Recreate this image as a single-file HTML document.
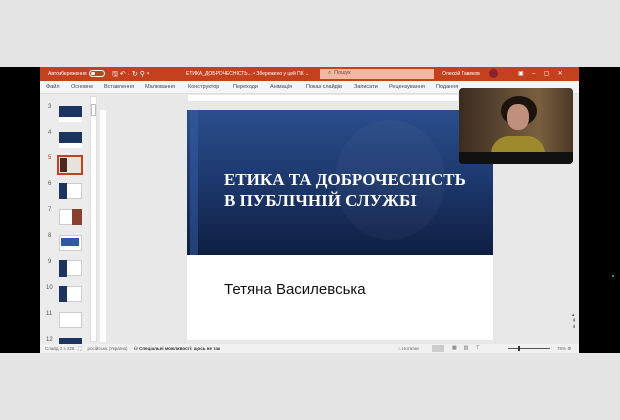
<!DOCTYPE html>
<html><head><meta charset="utf-8"><style>
*{margin:0;padding:0;box-sizing:border-box}
body{width:620px;height:420px;background:#e4e4e4;position:relative;overflow:hidden;font-family:"Liberation Sans",sans-serif}
.a{position:absolute}
.t{font-size:5px;color:#fff;white-space:nowrap}
.tab{font-size:5.5px;color:#444;white-space:nowrap;top:84px}
.th{position:absolute;left:59px;width:23px;height:16px;background:#fff;border:1px solid #ccc}
.n{position:absolute;left:48px;font-size:6px;color:#555}
.db{background:#1d3461}
</style></head><body>
<div class="a" style="left:0;top:67px;width:620px;height:286px;background:#000"></div>
<div class="a" style="left:40px;top:67px;width:539px;height:286px;background:#e8e8e8"></div>
<!-- title bar -->
<div class="a" style="left:40px;top:67px;width:539px;height:14px;background:#c3411f"></div>
<div class="a t" style="left:48px;top:71px">Автозбереження</div>
<div class="a" style="left:89px;top:70px;width:16px;height:7px;border:1px solid #fff;border-radius:4px"></div>
<div class="a" style="left:91px;top:72px;width:4px;height:3px;background:#fff;border-radius:2px"></div>
<div class="a t" style="left:112px;top:70px;font-size:7px">🖫 ↶ · ↻ ⚲ ▾</div>
<div class="a t" style="left:186px;top:71px">ЕТИКА_ДОБРОЧЕСНІСТЬ... • Збережено у цей ПК ⌄</div>
<div class="a" style="left:320px;top:69px;width:114px;height:10px;background:#f3b6a2"></div>
<div class="a" style="left:328px;top:70px;font-size:5.5px;color:#555">⌕ &nbsp;Пошук</div>
<div class="a t" style="left:442px;top:71px">Олексій Гавеков</div>
<div class="a" style="left:489px;top:69px;width:9px;height:9px;border-radius:50%;background:#8b2030"></div>
<div class="a t" style="left:518px;top:70px;font-size:6px">▣ &nbsp; &nbsp; – &nbsp; &nbsp; ▢ &nbsp; &nbsp; ✕</div>
<!-- ribbon -->
<div class="a" style="left:40px;top:81px;width:539px;height:13px;background:#f5f5f5;border-bottom:1px solid #ddd"></div>
<div class="a tab" style="left:46px">Файл</div>
<div class="a tab" style="left:71px">Основне</div>
<div class="a tab" style="left:104px">Вставлення</div>
<div class="a tab" style="left:145px">Малювання</div>
<div class="a tab" style="left:188px">Конструктор</div>
<div class="a tab" style="left:233px">Переходи</div>
<div class="a tab" style="left:270px">Анімація</div>
<div class="a tab" style="left:306px">Показ слайдів</div>
<div class="a tab" style="left:354px">Записати</div>
<div class="a tab" style="left:389px">Рецензування</div>
<div class="a tab" style="left:436px">Подання</div>
<!-- left panel -->
<div class="a" style="left:40px;top:95px;width:58px;height:249px;background:#ebebeb"></div>
<div class="a" style="left:90px;top:96px;width:7px;height:246px;background:#fff;border:1px solid #ddd"></div>
<div class="a" style="left:91px;top:104px;width:5px;height:12px;background:#fff;border:1px solid #bbb"></div>
<div class="n" style="top:104px">3</div><div class="th db" style="top:106px;height:11px;border:none"></div><div class="th" style="top:117px;height:5px;border:none"></div>
<div class="n" style="top:130px">4</div><div class="th db" style="top:132px;height:11px;border:none"></div><div class="th" style="top:143px;height:5px;border:none"></div>
<div class="n" style="top:155px;color:#c3411f">5</div><div class="th" style="top:155px;left:57px;width:26px;height:20px;border:2px solid #c3411f;background:#e8e2dc"></div><div class="a" style="left:60px;top:158px;width:7px;height:14px;background:#4a2820"></div>
<div class="n" style="top:181px">6</div><div class="th" style="top:183px"></div><div class="a db" style="left:59px;top:183px;width:8px;height:16px"></div>
<div class="n" style="top:207px">7</div><div class="th" style="top:209px"></div><div class="a" style="left:72px;top:209px;width:10px;height:16px;background:#8a4030"></div>
<div class="n" style="top:233px">8</div><div class="th" style="top:235px"></div><div class="a" style="left:61px;top:238px;width:18px;height:8px;background:#2c5aa8"></div>
<div class="n" style="top:259px">9</div><div class="th" style="top:260px"></div><div class="a db" style="left:59px;top:260px;width:8px;height:17px"></div>
<div class="n" style="top:285px;left:46px">10</div><div class="th" style="top:286px"></div><div class="a db" style="left:59px;top:286px;width:8px;height:16px"></div>
<div class="n" style="top:311px;left:46px">11</div><div class="th" style="top:312px"></div>
<div class="n" style="top:337px;left:46px">12</div><div class="th db" style="top:338px;height:6px;border:none"></div>
<!-- rulers -->
<div class="a" style="left:100px;top:110px;width:6px;height:232px;background:#fff"></div>
<div class="a" style="left:188px;top:95px;width:270px;height:6px;background:#fff"></div>
<!-- slide -->
<div class="a" style="left:187px;top:110px;width:306px;height:230px;background:#fff"></div>
<div class="a" style="left:187px;top:110px;width:306px;height:145px;background:linear-gradient(180deg,#2b4e8c 0%,#1e3a70 45%,#0f1f42 100%)"></div>
<div class="a" style="left:190px;top:110px;width:8px;height:145px;background:#3560a8;opacity:.5"></div>
<div class="a" style="left:335px;top:120px;width:110px;height:120px;border-radius:50%;background:rgba(255,255,255,.03)"></div>
<div class="a" style="left:224px;top:169px;font-family:'Liberation Serif',serif;font-weight:bold;font-size:17px;line-height:21px;color:#fff;white-space:nowrap">ЕТИКА ТА ДОБРОЧЕСНІСТЬ<br>В ПУБЛІЧНІЙ СЛУЖБІ</div>
<div class="a" style="left:224px;top:281px;font-size:15px;color:#111;white-space:nowrap">Тетяна Василевська</div>
<!-- right scrollbar -->
<div class="a" style="left:572px;top:312px;width:6px;height:30px;background:#e8e8e8;font-size:5px;color:#555">▴<br>⇞<br>⇟</div>
<!-- webcam -->
<div class="a" style="left:459px;top:88px;width:114px;height:76px;background:#111;border-radius:4px;overflow:hidden">
 <div class="a" style="left:0;top:0;width:114px;height:64px;background:linear-gradient(90deg,#3a2c1e,#5a4530 35%,#7a6040 70%,#4a3826)"></div>
 <div class="a" style="left:42px;top:8px;width:36px;height:30px;border-radius:50%;background:#1d1410"></div>
 <div class="a" style="left:48px;top:16px;width:22px;height:26px;border-radius:45%;background:#c0907c"></div>
 <div class="a" style="left:32px;top:48px;width:54px;height:18px;border-radius:18px 18px 0 0;background:#9c8a2c"></div>
 <div class="a" style="left:0;top:64px;width:114px;height:12px;background:#111"></div>
</div>
<!-- status bar -->
<div class="a" style="left:40px;top:344px;width:539px;height:9px;background:#f0f0f0"></div>
<div class="a" style="left:45px;top:346px;font-size:4.5px;color:#666;white-space:nowrap">Слайд 2 з 225 &nbsp; ⛶ &nbsp; &nbsp; російська (Україна) &nbsp; &nbsp;<b style="color:#333"> ⚇ Спеціальні можливості: щось не так</b></div>
<div class="a" style="left:398px;top:346px;font-size:4.5px;color:#666;white-space:nowrap">⌂ Нотатки</div>
<div class="a" style="left:432px;top:345px;width:12px;height:7px;background:#ccc"></div>
<div class="a" style="left:452px;top:345px;font-size:5px;color:#666;white-space:nowrap">▦ &nbsp; &nbsp; ▥ &nbsp; &nbsp; ⊤</div>
<div class="a" style="left:508px;top:348px;width:42px;height:1px;background:#555"></div>
<div class="a" style="left:518px;top:346px;width:2px;height:5px;background:#333"></div>
<div class="a" style="left:557px;top:346px;font-size:4.5px;color:#666">76% ⚙</div>
<div class="a" style="left:612px;top:275px;width:2px;height:2px;background:#2a2"></div>
</body></html>
